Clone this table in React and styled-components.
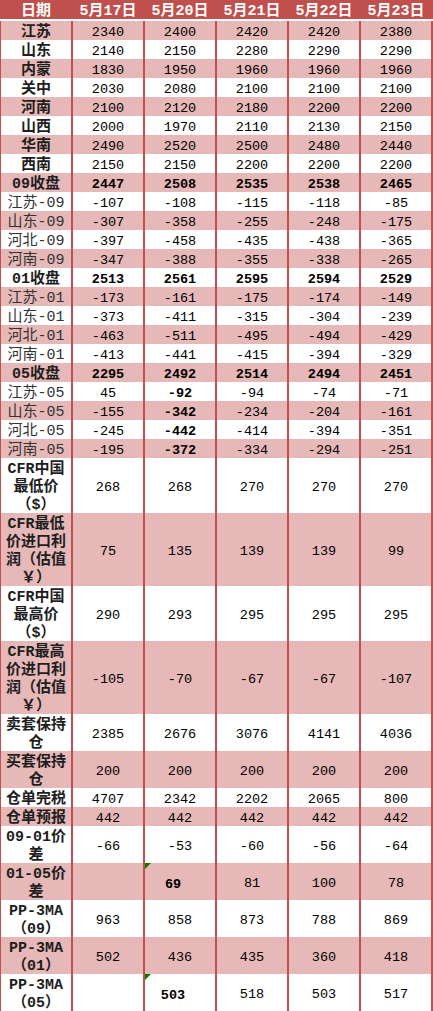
import React from "react";
import styled, { createGlobalStyle, css } from "styled-components";

const RED = "#C0504D";
const PINK = "#E6B8B7";
const FONT = `"Liberation Mono", "Noto Sans CJK SC", monospace`;

const GlobalStyle = createGlobalStyle`
  html, body {
    margin: 0;
    padding: 0;
    background: #fff;
  }
  body {
    font-family: ${FONT};
  }
`;

const Sheet = styled.div`
  width: 433px;
  display: flex;
  flex-direction: column;
  background: ${RED};
`;

const HeaderRow = styled.div`
  display: grid;
  grid-template-columns: repeat(6, 70px);
  column-gap: 2px;
  height: 19px;
  padding-left: 1px;
  border-bottom: 2px solid #fff;
`;

const HeaderCell = styled.div`
  display: flex;
  align-items: center;
  justify-content: center;
  padding-top: 2px;
  color: #fff;
  font-size: 15px;
  font-weight: 700;
  line-height: 19px;
  white-space: nowrap;
`;

const Body = styled.div`
  display: flex;
  flex-direction: column;
  gap: 2px;
  padding: 0 2px 2px 1px;
`;

const Row = styled.div`
  display: grid;
  grid-template-columns: repeat(6, 70px);
  column-gap: 2px;
  height: ${(p) => p.$lines * 18 - 1}px;
`;

const Cell = styled.div`
  position: relative;
  display: flex;
  align-items: center;
  justify-content: center;
  padding-top: 1px;
  background: ${(p) => (p.$pink ? PINK : "#fff")};
  color: #000;
  font-size: 13.5px;
  line-height: 17px;
  font-weight: ${(p) => (p.$bold ? 700 : 400)};
  white-space: nowrap;
  ${(p) =>
    p.$flag &&
    css`
      padding: 3px 14px 0 0;
      &::before {
        content: "";
        position: absolute;
        top: 0;
        left: 0;
        border-top: 6px solid #008000;
        border-right: 6px solid transparent;
      }
    `}
`;

const Label = styled(Cell)`
  flex-direction: column;
  padding-top: 3px;
  font-size: 15px;
  line-height: 18px;
  color: ${(p) => (p.$bold ? "#1e1e1e" : "#333")};
`;

const Line = styled.span`
  display: block;
  height: 18px;
`;

const dates = ["5月17日", "5月20日", "5月21日", "5月22日", "5月23日"];

// label lines, bold label, values; a value written as {v, b, f} is bold / flagged
const rows = [
  [["江苏"], 1, [2340, 2400, 2420, 2420, 2380]],
  [["山东"], 1, [2140, 2150, 2280, 2290, 2290]],
  [["内蒙"], 1, [1830, 1950, 1960, 1960, 1960]],
  [["关中"], 1, [2030, 2080, 2100, 2100, 2100]],
  [["河南"], 1, [2100, 2120, 2180, 2200, 2200]],
  [["山西"], 1, [2000, 1970, 2110, 2130, 2150]],
  [["华南"], 1, [2490, 2520, 2500, 2480, 2440]],
  [["西南"], 1, [2150, 2150, 2200, 2200, 2200]],
  [["09收盘"], 1, [2447, 2508, 2535, 2538, 2465], true],
  [["江苏-09"], 0, [-107, -108, -115, -118, -85]],
  [["山东-09"], 0, [-307, -358, -255, -248, -175]],
  [["河北-09"], 0, [-397, -458, -435, -438, -365]],
  [["河南-09"], 0, [-347, -388, -355, -338, -265]],
  [["01收盘"], 1, [2513, 2561, 2595, 2594, 2529], true],
  [["江苏-01"], 0, [-173, -161, -175, -174, -149]],
  [["山东-01"], 0, [-373, -411, -315, -304, -239]],
  [["河北-01"], 0, [-463, -511, -495, -494, -429]],
  [["河南-01"], 0, [-413, -441, -415, -394, -329]],
  [["05收盘"], 1, [2295, 2492, 2514, 2494, 2451], true],
  [["江苏-05"], 0, [45, { v: -92, b: 1 }, -94, -74, -71]],
  [["山东-05"], 0, [-155, { v: -342, b: 1 }, -234, -204, -161]],
  [["河北-05"], 0, [-245, { v: -442, b: 1 }, -414, -394, -351]],
  [["河南-05"], 0, [-195, { v: -372, b: 1 }, -334, -294, -251]],
  [["CFR中国", "最低价", "（$）"], 1, [268, 268, 270, 270, 270]],
  [["CFR最低", "价进口利", "润（估值", "￥）"], 1, [75, 135, 139, 139, 99]],
  [["CFR中国", "最高价", "（$）"], 1, [290, 293, 295, 295, 295]],
  [["CFR最高", "价进口利", "润（估值", "￥）"], 1, [-105, -70, -67, -67, -107]],
  [["卖套保持", "仓"], 1, [2385, 2676, 3076, 4141, 4036]],
  [["买套保持", "仓"], 1, [200, 200, 200, 200, 200]],
  [["仓单完税"], 1, [4707, 2342, 2202, 2065, 800]],
  [["仓单预报"], 1, [442, 442, 442, 442, 442]],
  [["09-01价", "差"], 1, [-66, -53, -60, -56, -64]],
  [["01-05价", "差"], 1, ["", { v: 69, b: 1, f: 1 }, 81, 100, 78]],
  [["PP-3MA", "（09）"], 1, [963, 858, 873, 788, 869]],
  [["PP-3MA", "（01）"], 1, [502, 436, 435, 360, 418]],
  [["PP-3MA", "（05）"], 1, ["", { v: 503, b: 1, f: 1 }, 518, 503, 517]],
];

export default function App() {
  return (
    <>
      <GlobalStyle />
      <Sheet>
        <HeaderRow>
          <HeaderCell>日期</HeaderCell>
          {dates.map((d) => (
            <HeaderCell key={d}>{d}</HeaderCell>
          ))}
        </HeaderRow>
        <Body>
          {rows.map(([label, boldLabel, values, boldRow], i) => {
            const pink = i % 2 === 0;
            return (
              <Row key={i} $lines={label.length}>
                <Label $pink={pink} $bold={!!boldLabel}>
                  {label.map((line) => (
                    <Line key={line}>{line}</Line>
                  ))}
                </Label>
                {values.map((val, j) => {
                  const obj = typeof val === "object" ? val : { v: val };
                  return (
                    <Cell
                      key={j}
                      $pink={pink}
                      $bold={boldRow || !!obj.b}
                      $flag={!!obj.f}
                    >
                      {obj.v}
                    </Cell>
                  );
                })}
              </Row>
            );
          })}
        </Body>
      </Sheet>
    </>
  );
}
